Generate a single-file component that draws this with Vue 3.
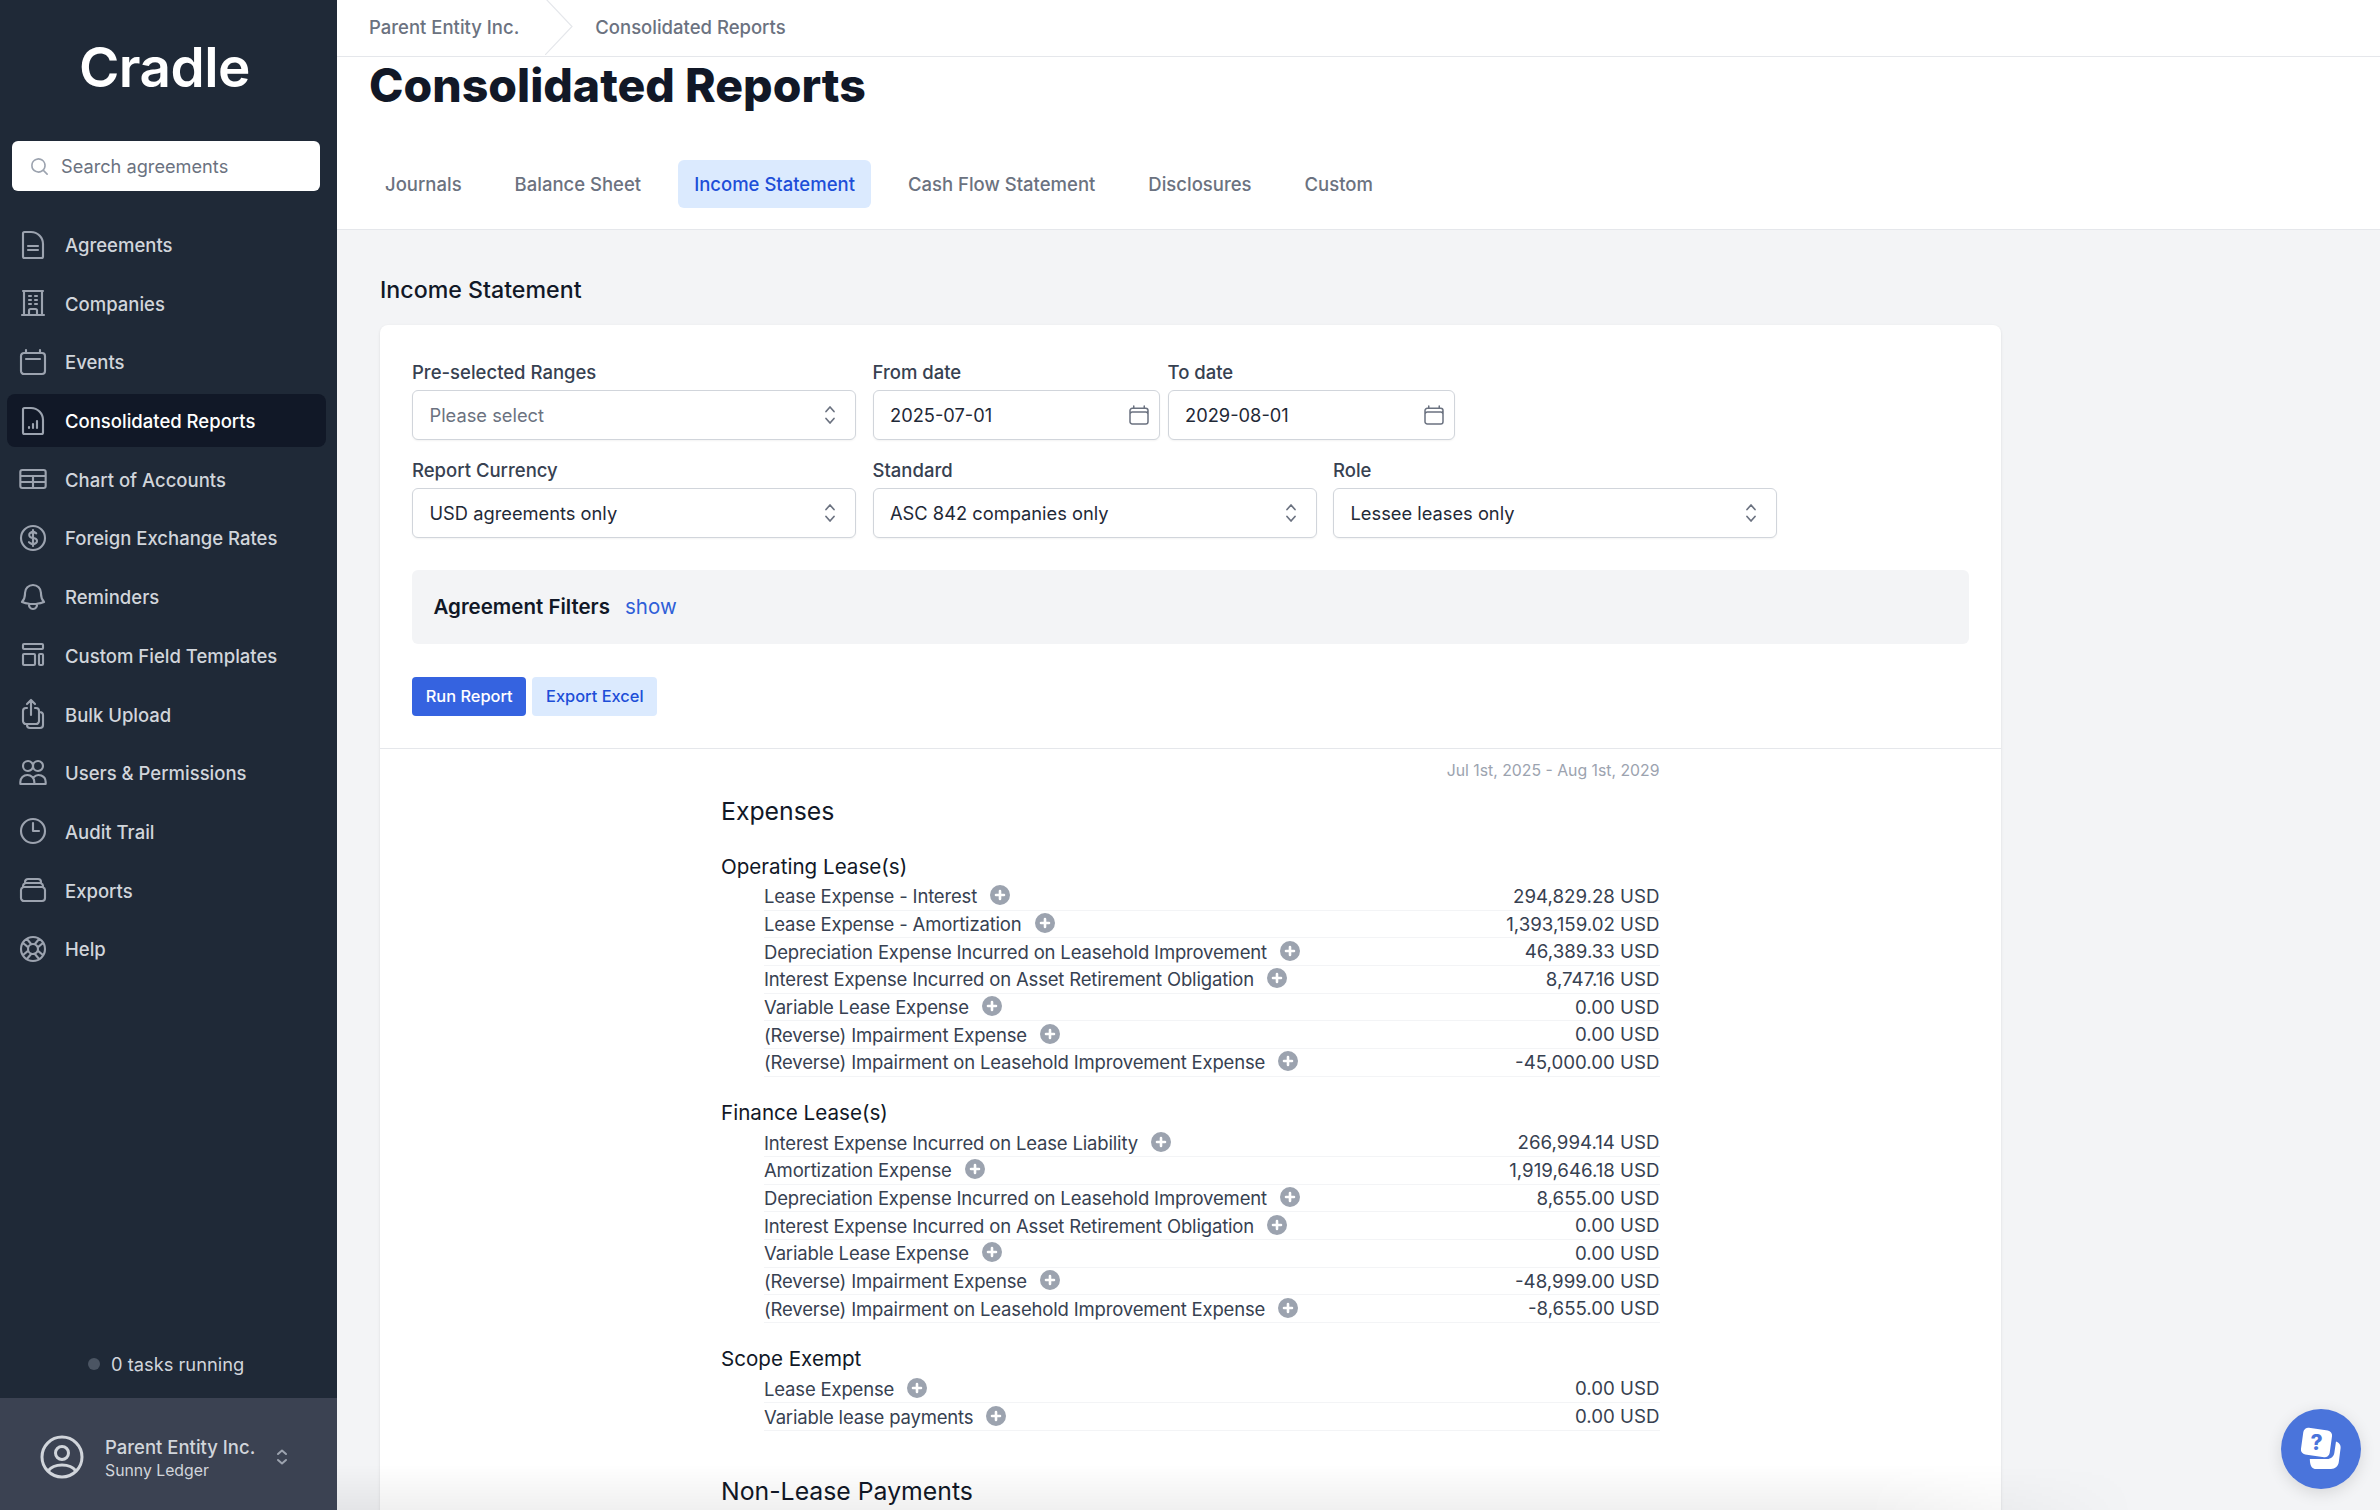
<template>
  <div class="app">
    <!-- sidebar -->
    <aside class="sidebar">
      <div class="logo">Cradle</div>
      <div class="search">
        <svg class="search-icon" viewBox="0 0 20 20" fill="currentColor">
          <path fill-rule="evenodd" d="M9 3.500a5.500 5.500 0 100 11 5.500 5.500 0 000-11zM2 9a7 7 0 1112.452 4.391l3.328 3.329a.750.750 0 11-1.060 1.060l-3.329-3.328A7 7 0 012 9z" clip-rule="evenodd" />
        </svg>
        <span>Search agreements</span>
      </div>
      <nav class="nav">
        <a v-for="item in navItems" :key="item.label" class="nav-item" :class="{ active: item.active }">
          <svg class="nav-icon" viewBox="0 0 24 24" fill="none" stroke="currentColor" stroke-width="1.6" stroke-linecap="round" stroke-linejoin="round">
            <path :d="item.icon" />
          </svg>
          <span class="nav-label">{{ item.label }}</span>
        </a>
      </nav>
      <div class="tasks">
        <span class="tasks-dot"></span>
        <span>0 tasks running</span>
      </div>
      <div class="account">
        <svg class="account-icon" viewBox="0 0 44 44" fill="none" stroke="currentColor" stroke-width="3">
          <circle cx="22" cy="22" r="20" />
          <circle cx="22" cy="18" r="6.500" />
          <path d="M8 36c3-4 8-6 14-6s11 2 14 6" />
        </svg>
        <div class="account-text">
          <div class="account-name">Parent Entity Inc.</div>
          <div class="account-sub">Sunny Ledger</div>
        </div>
        <svg class="account-chevron" viewBox="0 0 20 20" fill="none" stroke="currentColor" stroke-width="2" stroke-linecap="round" stroke-linejoin="round">
          <path d="M6 7l4-3.500L14 7M6 13l4 3.500 4-3.500" />
        </svg>
      </div>
    </aside>

    <!-- main -->
    <main class="main">
      <header class="crumbs">
        <span class="crumb">Parent Entity Inc.</span>
        <svg class="crumb-sep" viewBox="0 0 28 57" fill="none" stroke="#e5e7eb" stroke-width="1.2">
          <path d="M0 0l27 28.500L0 57" />
        </svg>
        <span class="crumb">Consolidated Reports</span>
      </header>

      <section class="page-head">
        <h1 class="title">Consolidated Reports</h1>
        <div class="tabs">
          <a v-for="t in tabs" :key="t" class="tab" :class="{ active: t === 'Income Statement' }">{{ t }}</a>
        </div>
      </section>

      <section class="content">
        <h2 class="content-title">Income Statement</h2>
        <div class="card">
          <div class="form">
            <div class="form-row">
              <div class="field w-select">
                <label>Pre-selected Ranges</label>
                <div class="input placeholder">
                  <span>Please select</span>
                  <svg class="chevrons" viewBox="0 0 12 20" fill="none" stroke="currentColor" stroke-width="1.7" stroke-linecap="round" stroke-linejoin="round"><path d="M2 6.500L6 2l4 4.500M2 13.500L6 18l4-4.500" /></svg>
                </div>
              </div>
              <div class="date-pair">
                <div class="field w-date">
                  <label>From date</label>
                  <div class="input">
                    <span>2025-07-01</span>
                    <svg class="cal" viewBox="0 0 24 24" fill="none" stroke="currentColor" stroke-width="1.500" stroke-linecap="round"><path :d="calIcon" /></svg>
                  </div>
                </div>
                <div class="field w-date">
                  <label>To date</label>
                  <div class="input">
                    <span>2029-08-01</span>
                    <svg class="cal" viewBox="0 0 24 24" fill="none" stroke="currentColor" stroke-width="1.500" stroke-linecap="round"><path :d="calIcon" /></svg>
                  </div>
                </div>
              </div>
            </div>
            <div class="form-row">
              <div v-for="f in selects" :key="f.label" class="field w-select">
                <label>{{ f.label }}</label>
                <div class="input">
                  <span>{{ f.value }}</span>
                  <svg class="chevrons" viewBox="0 0 12 20" fill="none" stroke="currentColor" stroke-width="1.7" stroke-linecap="round" stroke-linejoin="round"><path d="M2 6.500L6 2l4 4.500M2 13.500L6 18l4-4.500" /></svg>
                </div>
              </div>
            </div>
            <div class="filters">
              <strong>Agreement Filters</strong>
              <a class="show">show</a>
            </div>
            <div class="actions">
              <button class="btn primary">Run Report</button>
              <button class="btn soft">Export Excel</button>
            </div>
          </div>

          <div class="report">
            <div class="report-date">Jul 1st, 2025 - Aug 1st, 2029</div>
            <h3 class="report-head">Expenses</h3>
            <div v-for="group in groups" :key="group.name" class="group">
              <h4 class="group-name">{{ group.name }}</h4>
              <div v-for="row in group.rows" :key="row[0]" class="row">
                <span class="row-label">
                  {{ row[0] }}
                  <svg class="plus" viewBox="0 0 20 20" fill="currentColor">
                    <path fill-rule="evenodd" d="M10 20a10 10 0 100-20 10 10 0 000 20zm1.300-14a1.300 1.300 0 00-2.600 0v2.700H6a1.300 1.300 0 000 2.600h2.700V14a1.300 1.300 0 002.600 0v-2.700H14a1.300 1.300 0 000-2.600h-2.700V6z" clip-rule="evenodd" />
                  </svg>
                </span>
                <span class="row-value">{{ row[1] }} USD</span>
              </div>
            </div>
            <h3 class="report-head next">Non-Lease Payments</h3>
          </div>
        </div>
      </section>

      <div class="fade"></div>

      <button class="help">
        <svg viewBox="0 0 44 44" width="44" height="44">
          <path fill="#fff" d="M37 14.500c3 1 5 3.500 4.600 6.500l-1.800 14c-.5 4-3.500 7-7.800 7H17c-3.500 0-5.500-2.500-6-7l-.2-3h17c4.500 0 7-2.500 7.600-6.500z" />
          <rect x="3" y="2" width="29" height="27" rx="5" fill="#fff" transform="rotate(8 17.500 15.500)" />
          <text x="17.500" y="23" text-anchor="middle" class="help-q">?</text>
        </svg>
      </button>
    </main>
  </div>
</template>

<script setup>
const calIcon = "M6.750 3v2.250M17.250 3v2.250M3 18.750V7.500a2.250 2.250 0 012.250-2.250h13.500A2.250 2.250 0 0121 7.500v11.250m-18 0A2.250 2.250 0 005.250 21h13.500A2.250 2.250 0 0021 18.750m-18 0v-7.500A2.250 2.250 0 015.250 9h13.500A2.250 2.250 0 0121 11.250v7.500";

const navItems = [
  { label: "Agreements", icon: "M8.250 12.750h7.500M8.250 15.750h7.500M10.500 2.250H5.625c-.621 0-1.125.504-1.125 1.125v17.250c0 .621.504 1.125 1.125 1.125h12.750c.621 0 1.125-.504 1.125-1.125V11.250a9 9 0 00-9-9z" },
  { label: "Companies", icon: "M3.750 21h16.500M4.500 3h15M5.250 3v18m13.500-18v18M9 6.750h1.500m-1.500 3h1.500m-1.500 3h1.500m3-6H15m-1.500 3H15m-1.500 3H15M9 21v-3.375c0-.621.504-1.125 1.125-1.125h3.750c.621 0 1.125.504 1.125 1.125V21" },
  { label: "Events", icon: "M6.750 3v2.250M17.250 3v2.250M3 18.750V7.500a2.250 2.250 0 012.250-2.250h13.500A2.250 2.250 0 0121 7.500v11.250A2.250 2.250 0 0118.750 21H5.250A2.250 2.250 0 013 18.750zM6.750 9.750h10.500" },
  { label: "Consolidated Reports", active: true, icon: "M9 16.500v.750m3-3v3M15 12v5.250M10.500 2.250H5.625c-.621 0-1.125.504-1.125 1.125v17.250c0 .621.504 1.125 1.125 1.125h12.750c.621 0 1.125-.504 1.125-1.125V11.250a9 9 0 00-9-9z" },
  { label: "Chart of Accounts", icon: "M4 5.250h16A1.500 1.500 0 0121.500 6.750v10.500a1.500 1.500 0 01-1.500 1.500H4a1.500 1.500 0 01-1.500-1.500V6.750A1.500 1.500 0 014 5.250zM2.500 9.750h19M2.500 14.250h19M12 9.750v9" },
  { label: "Foreign Exchange Rates", icon: "M12 6v12m-3-2.818l.879.659c1.171.879 3.070.879 4.242 0 1.172-.879 1.172-2.303 0-3.182C13.536 12.219 12.768 12 12 12c-.725 0-1.450-.220-2.003-.659-1.106-.879-1.106-2.303 0-3.182s2.900-.879 4.006 0l.415.330M21 12a9 9 0 11-18 0 9 9 0 0118 0z" },
  { label: "Reminders", icon: "M14.857 17.082a23.848 23.848 0 005.454-1.310A8.967 8.967 0 0118 9.750v-.700V9A6 6 0 006 9v.750a8.967 8.967 0 01-2.312 6.022c1.733.640 3.560 1.085 5.455 1.310m5.714 0a24.255 24.255 0 01-5.714 0m5.714 0a3 3 0 11-5.714 0" },
  { label: "Custom Field Templates", icon: "M5.250 3.750h13.500a.750.750 0 01.750.750v2.250a.750.750 0 01-.750.750H5.250a.750.750 0 01-.750-.750V4.500a.750.750 0 01.750-.750zM5.250 11.250h7.500a.750.750 0 01.750.750v6.750a.750.750 0 01-.750.750h-7.500a.750.750 0 01-.750-.750V12a.750.750 0 01.750-.750zM17.250 11.250h1.500a.750.750 0 01.750.750v6.750a.750.750 0 01-.750.750h-1.500a.750.750 0 01-.750-.750V12a.750.750 0 01.750-.750z" },
  { label: "Bulk Upload", icon: "M7.500 7.500h-.750A2.250 2.250 0 004.500 9.750v7.500a2.250 2.250 0 002.250 2.250h7.500a2.250 2.250 0 002.250-2.250v-7.500a2.250 2.250 0 00-2.250-2.250h-.750m0-3l-3-3m0 0l-3 3m3-3v11.250m6-2.250h.750a2.250 2.250 0 012.250 2.250v7.500a2.250 2.250 0 01-2.250 2.250h-7.500a2.250 2.250 0 01-2.250-2.250v-.750" },
  { label: "Users & Permissions", icon: "M12 6.750a3.750 3.750 0 11-7.500 0 3.750 3.750 0 017.500 0zM19.500 6.750a3.750 3.750 0 11-7.500 0 3.750 3.750 0 017.500 0zM2.500 20.250v-1.500a5.250 5.250 0 0110.500 0v1.500zM13 20.250h8.500v-1.500a5.250 5.250 0 00-9-3.600" },
  { label: "Audit Trail", icon: "M12 6v6h4.500m4.500 0a9 9 0 11-18 0 9 9 0 0118 0z" },
  { label: "Exports", icon: "M6 6.878V6a2.250 2.250 0 012.250-2.250h7.500A2.250 2.250 0 0118 6v.878m-12 0c.235-.083.487-.128.750-.128h10.500c.263 0 .515.045.750.128m-12 0A2.250 2.250 0 004.500 9v.878m13.500-3A2.250 2.250 0 0119.500 9v.878m0 0a2.246 2.246 0 00-.750-.128H5.250c-.263 0-.515.045-.750.128m15 0A2.250 2.250 0 0121 12v6a2.250 2.250 0 01-2.250 2.250H5.250A2.250 2.250 0 013 18v-6c0-.980.626-1.813 1.500-2.122" },
  { label: "Help", icon: "M16.712 4.330l-3.448 4.138M19.670 7.288l-4.138 3.448M15.532 13.264l4.138 3.448M13.264 15.532l3.448 4.138M8.468 13.264L4.330 16.712M10.736 15.532L7.288 19.670M10.736 8.468L7.288 4.330M8.468 10.736L4.330 7.288M21 12a9 9 0 11-18 0 9 9 0 0118 0zM15.750 12a3.750 3.750 0 11-7.500 0 3.750 3.750 0 017.500 0z" },
];

const tabs = ["Journals", "Balance Sheet", "Income Statement", "Cash Flow Statement", "Disclosures", "Custom"];

const selects = [
  { label: "Report Currency", value: "USD agreements only" },
  { label: "Standard", value: "ASC 842 companies only" },
  { label: "Role", value: "Lessee leases only" },
];

const groups = [
  {
    name: "Operating Lease(s)",
    rows: [
      ["Lease Expense - Interest", "294,829.28"],
      ["Lease Expense - Amortization", "1,393,159.02"],
      ["Depreciation Expense Incurred on Leasehold Improvement", "46,389.33"],
      ["Interest Expense Incurred on Asset Retirement Obligation", "8,747.16"],
      ["Variable Lease Expense", "0.00"],
      ["(Reverse) Impairment Expense", "0.00"],
      ["(Reverse) Impairment on Leasehold Improvement Expense", "-45,000.00"],
    ],
  },
  {
    name: "Finance Lease(s)",
    rows: [
      ["Interest Expense Incurred on Lease Liability", "266,994.14"],
      ["Amortization Expense", "1,919,646.18"],
      ["Depreciation Expense Incurred on Leasehold Improvement", "8,655.00"],
      ["Interest Expense Incurred on Asset Retirement Obligation", "0.00"],
      ["Variable Lease Expense", "0.00"],
      ["(Reverse) Impairment Expense", "-48,999.00"],
      ["(Reverse) Impairment on Leasehold Improvement Expense", "-8,655.00"],
    ],
  },
  {
    name: "Scope Exempt",
    rows: [
      ["Lease Expense", "0.00"],
      ["Variable lease payments", "0.00"],
    ],
  },
];
</script>

<style>
html,
body {
  margin: 0;
  height: 1510px;
  overflow: hidden;
}
</style>

<style scoped>
.app {
  display: flex;
  width: 2380px;
  height: 1510px;
  overflow: hidden;
  font-family: Inter, "Liberation Sans", sans-serif;
  font-size: 18.500px;
  color: #111827;
  background: #f3f4f6;
}

/* sidebar */
.sidebar {
  width: 337px;
  flex-shrink: 0;
  display: flex;
  flex-direction: column;
  background: #1f2937;
  color: #d1d5db;
}
.logo {
  height: 141px;
  padding: 33px 8px 0 0;
  box-sizing: border-box;
  text-align: center;
  color: #fff;
  font-size: 54.800px;
  line-height: 68px;
  font-weight: 600;
  letter-spacing: -0.5px;
}
.search {
  display: flex;
  align-items: center;
  gap: 11px;
  height: 50px;
  margin: 0 17px 0 12px;
  padding-left: 17px;
  background: #fff;
  border-radius: 6px;
  color: #6b7280;
  font-size: 18.200px;
}
.search-icon {
  width: 21px;
  height: 21px;
  color: #9ca3af;
}
.nav {
  display: flex;
  flex-direction: column;
  gap: 5.700px;
  margin: 27px 11px 0 7px;
}
.nav-item {
  display: flex;
  align-items: center;
  gap: 16px;
  height: 53px;
  padding-left: 10px;
  border-radius: 8px;
  font-weight: 500;
}
.nav-label {
  padding-top: 1px;
}
.nav-item.active {
  background: #111827;
  color: #fff;
}
.nav-icon {
  width: 32px;
  height: 32px;
  color: #9ca3af;
}
.tasks {
  margin-top: auto;
  height: 49px;
  display: flex;
  align-items: flex-start;
  gap: 11px;
  padding-left: 88px;
  line-height: 30px;
  font-size: 18.300px;
}
.tasks-dot {
  width: 12px;
  height: 12px;
  margin-top: 9px;
  border-radius: 50%;
  background: #4b5563;
}
.account {
  height: 112px;
  padding: 6px 0 0 40px;
  box-sizing: border-box;
  display: flex;
  align-items: center;
  background: #3b4252;
}
.account-icon {
  width: 44px;
  height: 44px;
  color: #d1d5db;
}
.account-text {
  margin-left: 21px;
  width: 165px;
}
.account-name {
  font-weight: 500;
  line-height: 24px;
  padding-top: 2px;
}
.account-sub {
  font-size: 15.800px;
  line-height: 23px;
}
.account-chevron {
  width: 20px;
  height: 24px;
  color: #9ca3af;
  margin-left: 2px;
}

/* main */
.main {
  position: relative;
  flex: 1;
  min-width: 0;
  display: flex;
  flex-direction: column;
}
.crumbs {
  height: 57px;
  flex-shrink: 0;
  box-sizing: border-box;
  display: flex;
  align-items: center;
  padding: 0 0 2px 32px;
  background: #fff;
  border-bottom: 1px solid #e5e7eb;
  color: #6b7280;
  font-weight: 500;
}
.crumb-sep {
  width: 28px;
  height: 57px;
  margin: -2px 22px 0 26px;
}
.page-head {
  height: 173px;
  flex-shrink: 0;
  box-sizing: border-box;
  padding: 0 0 0 32px;
  background: #fff;
  border-bottom: 1px solid #e5e7eb;
}
.title {
  margin: 0;
  font-size: 46.400px;
  line-height: 56px;
  font-weight: 800;
  color: #111827;
}
.tabs {
  display: flex;
  gap: 21px;
  margin-top: 47px;
}
.tab {
  height: 48px;
  line-height: 49px;
  padding: 0 16px;
  border-radius: 6px;
  color: #6b7280;
  font-weight: 500;
}
.tab.active {
  background: #dbeafe;
  color: #1d4ed8;
}
.content {
  flex: 1;
  padding: 42px 0 0 43px;
  width: 1621px;
}
.content-title {
  margin: 0 0 17px;
  font-size: 23.200px;
  line-height: 36px;
  font-weight: 500;
}
.card {
  background: #fff;
  border-radius: 8px 8px 0 0;
  box-shadow: 0 1px 3px rgba(0, 0, 0, 0.1);
}
.form {
  padding: 34px 32px 32px;
  border-bottom: 1px solid #e5e7eb;
}
.form-row {
  display: flex;
  gap: 16.500px;
  margin-bottom: 16.500px;
}
.date-pair {
  display: flex;
  gap: 7.500px;
}
.field label {
  display: block;
  margin-bottom: 4px;
  line-height: 27px;
  font-weight: 500;
  color: #374151;
}
.w-select {
  width: 444px;
}
.w-date {
  width: 287.500px;
}
.input {
  display: flex;
  align-items: center;
  justify-content: space-between;
  box-sizing: border-box;
  height: 50px;
  padding: 0 8px 0 16.500px;
  background: #fff;
  border: 1px solid #d1d5db;
  border-radius: 6px;
  box-shadow: 0 1px 2px rgba(0, 0, 0, 0.05);
  color: #1f2937;
  font-size: 18.300px;
}
.input.placeholder {
  color: #6b7280;
}
.chevrons {
  width: 12px;
  height: 20px;
  margin-right: 11px;
  color: #6b7280;
}
.cal {
  width: 24px;
  height: 24px;
  color: #6b7280;
}
.filters {
  display: flex;
  align-items: center;
  gap: 15px;
  height: 74px;
  margin-top: 32px;
  padding-left: 21.500px;
  border-radius: 6px;
  background: #f3f4f6;
  font-size: 20.500px;
}
.filters strong {
  font-weight: 600;
}
.show {
  color: #2f5fd8;
}
.actions {
  display: flex;
  gap: 6px;
  margin-top: 33px;
}
.btn {
  height: 39px;
  padding: 0 13.700px;
  border: none;
  border-radius: 4px;
  font: 500 16.400px Inter, "Liberation Sans", sans-serif;
}
.btn.primary {
  background: #3563e0;
  color: #fff;
}
.btn.soft {
  background: #dbeafe;
  color: #1d4ed8;
}

/* report */
.report {
  width: 938.500px;
  margin-left: 341px;
  padding: 9px 0 60px;
}
.report-date {
  text-align: right;
  font-size: 15.800px;
  line-height: 26px;
  color: #9ca3af;
}
.report-head {
  margin: 11px 0 25px;
  font-size: 24.800px;
  line-height: 32px;
  font-weight: 400;
  color: #111827;
}
.report-head.next {
  margin-top: 44px;
}
.group {
  margin-bottom: 21px;
}
.group-name {
  margin: 0 0 1.500px;
  font-size: 20.600px;
  line-height: 30px;
  font-weight: 400;
  color: #111827;
}
.row {
  display: flex;
  justify-content: space-between;
  align-items: center;
  box-sizing: border-box;
  height: 27.700px;
  margin-left: 43px;
  border-bottom: 1px solid #f3f4f6;
  color: #374151;
}
.row-label {
  display: flex;
  align-items: center;
  gap: 13px;
  letter-spacing: -0.17px;
}
.row-value {
  font-size: 18.700px;
}
.plus {
  width: 20px;
  height: 20px;
  margin-top: -2px;
  color: #9ca3af;
}

/* bottom fade + help */
.fade {
  position: absolute;
  left: 0;
  bottom: 0;
  width: 1800px;
  height: 46px;
  pointer-events: none;
  background: linear-gradient(to top, rgba(0, 0, 0, 0.06), rgba(0, 0, 0, 0));
  -webkit-mask-image: linear-gradient(to right, #000 85%, transparent);
  mask-image: linear-gradient(to right, #000 85%, transparent);
}
.help {
  position: absolute;
  right: 19px;
  bottom: 21px;
  width: 80px;
  height: 80px;
  padding: 0;
  display: flex;
  align-items: center;
  justify-content: center;
  border: none;
  border-radius: 50%;
  background: #4a74db;
  box-shadow: 0 4px 16px rgba(0, 0, 0, 0.12);
}
.help-q {
  font: 800 21px Inter, "Liberation Sans", sans-serif;
  fill: #4a74db;
}
</style>
